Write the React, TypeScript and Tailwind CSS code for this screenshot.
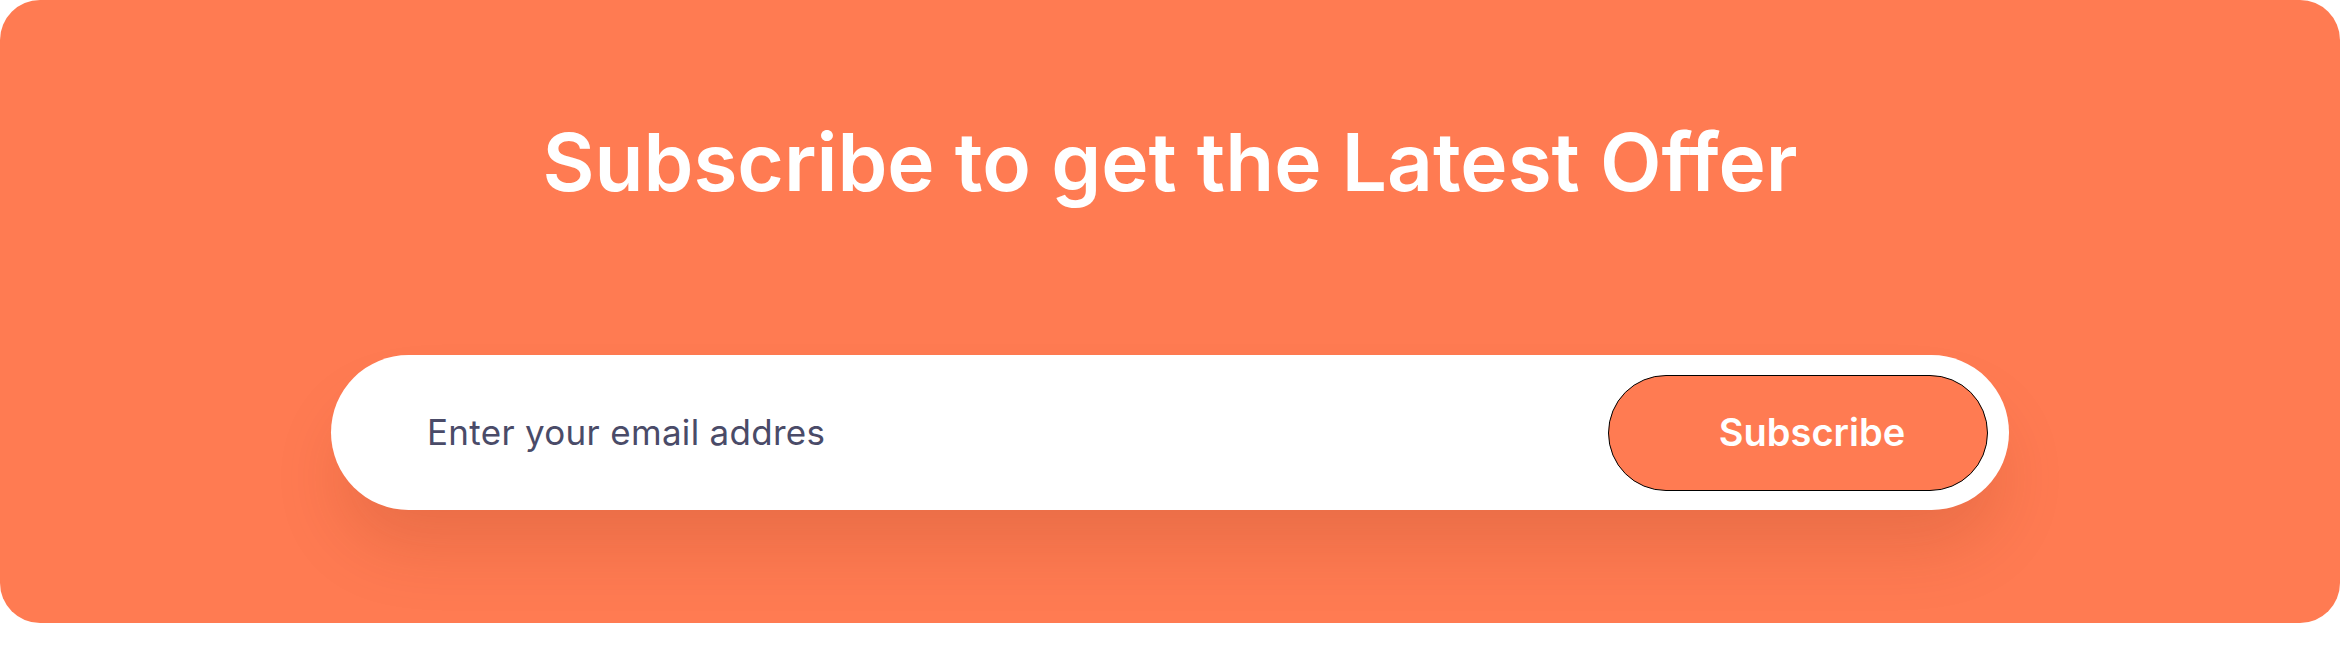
export default function App() {
  return (
    <div className="w-[2340px] bg-white" style={{ fontFamily: "Inter, 'Noto Sans', sans-serif" }}>
      <section className="h-[623px] rounded-[40px] bg-[#ff7b52] flex flex-col items-center">
        <h1 className="pt-[122px] text-[80px] leading-none font-semibold text-white">
          Subscribe to get the Latest Offer
        </h1>

        <div className="mt-[153px] w-[1678px] h-[155px] rounded-full bg-white flex items-center justify-between pl-[96px] pr-[21px] shadow-[0_45px_70px_-10px_rgba(120,40,10,0.16)]">
          <div className="text-[35px] text-[#4a4b68] tracking-[0.3px]">Enter your email addres</div>
          <button
            type="button"
            className="w-[380px] h-[116px] rounded-full bg-[#ff7b52] border border-black text-white text-[38px] font-semibold pl-[28px] flex items-center justify-center"
          >
            Subscribe
          </button>
        </div>
      </section>
    </div>
  );
}
